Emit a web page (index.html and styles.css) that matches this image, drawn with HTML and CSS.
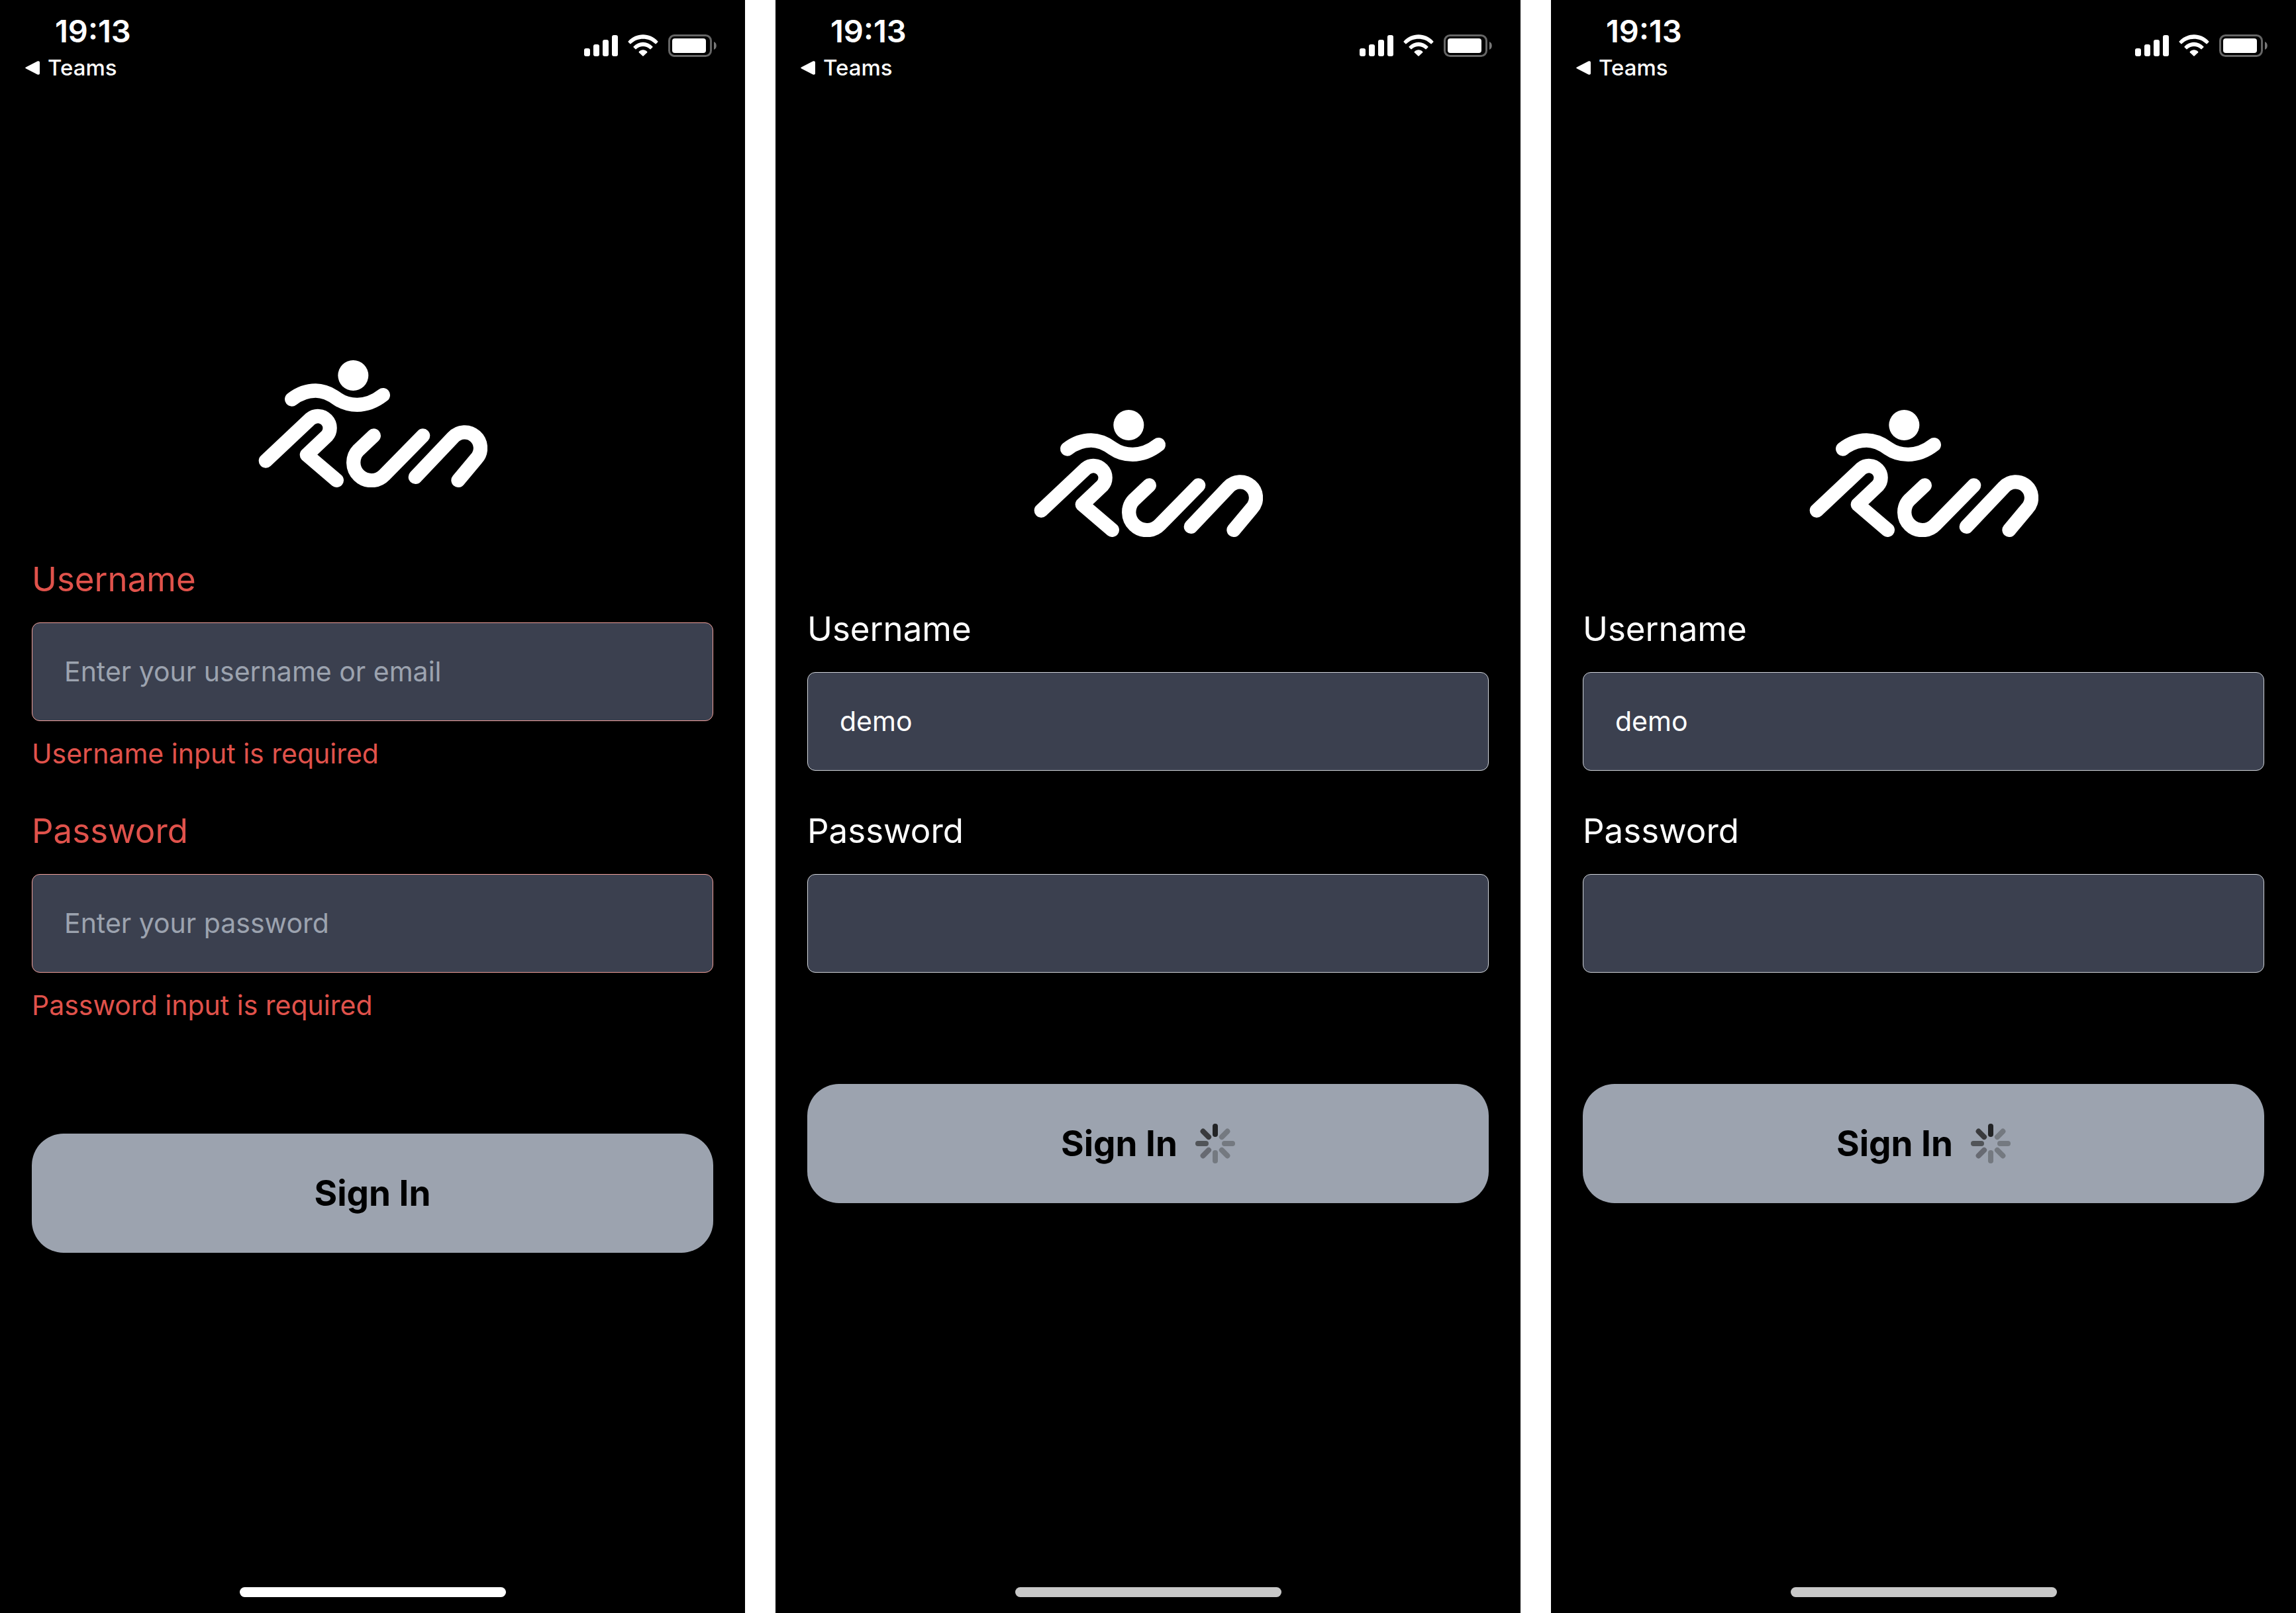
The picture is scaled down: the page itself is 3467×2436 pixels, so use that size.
FILE: index.html
```
<!DOCTYPE html>
<html lang="en">
<head>
<meta charset="utf-8">
<meta name="viewport" content="width=device-width, initial-scale=1">
<title>Run – Sign In</title>
<link rel="stylesheet" href="styles.css">
</head>
<body>
<svg class="sprite" aria-hidden="true">
  <symbol id="back" viewBox="0 0 22 21">
    <path d="M2 9 18.500 .6C20.500 -.3 22 .5 22 2.500V18.500C22 20.500 20.500 21.300 18.500 20.400L2 12C-.4 10.800 -.4 10.200 2 9Z"/>
  </symbol>
  <symbol id="status" viewBox="0 0 200 34">
    <rect x="0" y="21" width="9" height="12" rx="3"/>
    <rect x="14" y="15" width="9" height="18" rx="3"/>
    <rect x="28" y="8" width="9" height="25" rx="3"/>
    <rect x="42" y="1" width="9" height="32" rx="3"/>
    <path d="M66.600 10.400C78.500-3 99.500-3 111.400 10.400Q111.900 11 111.300 11.600L108.600 14.200Q107.900 14.700 107.300 14.100C97.500 4.300 80.500 4.300 70.700 14.100Q70.100 14.700 69.400 14.200L66.700 11.600Q66.100 11 66.600 10.400Z"/>
    <path d="M74.600 18.300C82.500 9.600 95.500 9.600 103.400 18.300Q103.900 19 103.300 19.600L100.500 22.200Q99.800 22.700 99.200 22.100C93.500 16.700 84.500 16.700 78.800 22.100Q78.200 22.700 77.500 22.200L74.700 19.600Q74.100 19 74.600 18.300Z"/>
    <path d="M82.800 26C86.300 22.200 91.700 22.200 95.200 26Q95.700 26.700 95.200 27.300L89.700 32.600Q89 33.100 88.300 32.600L82.800 27.300Q82.300 26.700 82.800 26Z"/>
    <rect x="128.500" y="1.500" width="63" height="31" rx="8" fill="none" stroke="#666" stroke-width="3"/>
    <rect x="133" y="6" width="51" height="22" rx="4"/>
    <path d="M196 11C201 12.500 201 21.500 196 23Z" fill="#777"/>
  </symbol>
  <symbol id="logo" viewBox="87 71 1038 576">
    <circle cx="517" cy="140" r="69"/>
    <g fill="none" stroke="currentColor" stroke-width="64" stroke-linecap="round" stroke-linejoin="round">
      <path d="M239 248C272 222 308 209 347 209C385 209 415 224 445 246C475 267 505 273 535 273C580 273 620 254 652 229"/>
      <path d="M121 527 324 336A54 54 0 0 1 398 414L307 500 442 615"/>
      <path d="M610 413 541 478A81 81 0 0 0 658 591L833 413"/>
      <path d="M799 600 969 421A71 71 0 0 1 1075 517L993 615"/>
    </g>
  </symbol>
  <symbol id="spinner" viewBox="-30 -30 60 60">
    <rect x="-4" y="-30" width="8" height="20" rx="4" fill="#222325"/>
    <rect x="-4" y="-30" width="8" height="20" rx="4" fill="#393a3d" transform="rotate(-45)"/>
    <rect x="-4" y="-30" width="8" height="20" rx="4" fill="#515458" transform="rotate(-90)"/>
    <rect x="-4" y="-30" width="8" height="20" rx="4" fill="#676a72" transform="rotate(-135)"/>
    <g fill="#747980">
      <rect x="-4" y="-30" width="8" height="20" rx="4" transform="rotate(180)"/>
      <rect x="-4" y="-30" width="8" height="20" rx="4" transform="rotate(135)"/>
      <rect x="-4" y="-30" width="8" height="20" rx="4" transform="rotate(90)"/>
      <rect x="-4" y="-30" width="8" height="20" rx="4" transform="rotate(45)"/>
    </g>
  </symbol>
</svg>
<div class="board">
  <section class="screen">
    <header class="status">
      <div class="status-left">
        <time class="clock">19:13</time>
        <a class="back" href="#"><svg class="back-icon"><use href="#back"/></svg>Teams</a>
      </div>
      <svg class="status-icons"><use href="#status"/></svg>
    </header>
    <main class="content">
      <svg class="logo" role="img" aria-label="Run"><use href="#logo"/></svg>
      <form class="form" novalidate>
        <div class="field invalid">
          <label class="label" for="user-1">Username</label>
          <input class="input" id="user-1" type="text" placeholder="Enter your username or email">
          <p class="error">Username input is required</p>
        </div>
        <div class="field invalid">
          <label class="label" for="pass-1">Password</label>
          <input class="input" id="pass-1" type="password" placeholder="Enter your password">
          <p class="error">Password input is required</p>
        </div>
        <button class="submit" type="button">Sign In</button>
      </form>
    </main>
    <footer class="home"><div class="home-bar"></div></footer>
  </section>
  <section class="screen">
    <header class="status">
      <div class="status-left">
        <time class="clock">19:13</time>
        <a class="back" href="#"><svg class="back-icon"><use href="#back"/></svg>Teams</a>
      </div>
      <svg class="status-icons"><use href="#status"/></svg>
    </header>
    <main class="content">
      <svg class="logo" role="img" aria-label="Run"><use href="#logo"/></svg>
      <form class="form" novalidate>
        <div class="field">
          <label class="label" for="user-2">Username</label>
          <input class="input" id="user-2" type="text" value="demo">
        </div>
        <div class="field">
          <label class="label" for="pass-2">Password</label>
          <input class="input" id="pass-2" type="password">
        </div>
        <button class="submit" type="button">Sign In<svg class="spinner"><use href="#spinner"/></svg></button>
      </form>
    </main>
    <footer class="home"><div class="home-bar dimmed"></div></footer>
  </section>
  <section class="screen">
    <header class="status">
      <div class="status-left">
        <time class="clock">19:13</time>
        <a class="back" href="#"><svg class="back-icon"><use href="#back"/></svg>Teams</a>
      </div>
      <svg class="status-icons"><use href="#status"/></svg>
    </header>
    <main class="content">
      <svg class="logo" role="img" aria-label="Run"><use href="#logo"/></svg>
      <form class="form" novalidate>
        <div class="field">
          <label class="label" for="user-3">Username</label>
          <input class="input" id="user-3" type="text" value="demo">
        </div>
        <div class="field">
          <label class="label" for="pass-3">Password</label>
          <input class="input" id="pass-3" type="password">
        </div>
        <button class="submit" type="button">Sign In<svg class="spinner"><use href="#spinner"/></svg></button>
      </form>
    </main>
    <footer class="home"><div class="home-bar dimmed"></div></footer>
  </section>
</div>
</body>
</html>
```

FILE: styles.css
```
* {
  box-sizing: border-box;
}

body {
  margin: 0;
  background: #fff;
  font-family: Inter, "Liberation Sans", sans-serif;
}

.sprite {
  display: none;
}

.board {
  display: grid;
  grid-template-columns: repeat(3, 1fr);
  gap: 46px;
  min-height: 100vh;
}

.screen {
  display: flex;
  flex-direction: column;
  background: #000;
  color: #fff;
}

.status {
  display: flex;
  justify-content: space-between;
  align-items: flex-start;
  height: 132px;
  padding: 20px 43px 0 38px;
}

.status-left {
  display: flex;
  flex-direction: column;
}

.clock {
  padding-left: 45px;
  font-size: 47px;
  font-weight: 600;
  line-height: 54px;
}

.back {
  display: flex;
  align-items: center;
  gap: 12px;
  color: inherit;
  font-size: 33px;
  font-weight: 500;
  line-height: 56px;
  text-decoration: none;
}

.back-icon {
  width: 22px;
  height: 21px;
  fill: #fff;
}

.status-icons {
  width: 200px;
  height: 34px;
  margin-top: 32px;
  fill: #fff;
}

.content {
  display: flex;
  flex: 1;
  flex-direction: column;
  align-items: center;
  justify-content: center;
  gap: 107px;
  padding: 0 48px;
}

.logo {
  width: 346px;
  height: 192px;
  fill: #fff;
}

.form {
  display: flex;
  flex-direction: column;
  gap: 59px;
  width: 100%;
}

.field {
  display: flex;
  flex-direction: column;
}

.label {
  margin-bottom: 33px;
  font-size: 51px;
  line-height: 64px;
}

.input {
  width: 100%;
  height: 149px;
  padding: 0 48px 2px;
  border: 1px solid #d1d5db;
  border-radius: 12px;
  background: #3b404f;
  color: #fff;
  font: inherit;
  font-size: 41px;
}

.input::placeholder {
  color: #9ca3af;
  opacity: 1;
}

.error {
  margin: 24px 0 0;
  font-size: 41px;
  line-height: 51px;
}

.invalid {
  color: #e0524b;
}

.invalid .input {
  border-color: #f0a09b;
}

.submit {
  display: flex;
  align-items: center;
  justify-content: center;
  gap: 27px;
  height: 180px;
  margin-top: 109px;
  border: 0;
  border-radius: 48px;
  background: #9ca3af;
  color: #000;
  font: inherit;
  font-size: 53px;
  font-weight: 700;
}

.spinner {
  width: 60px;
  height: 60px;
}

.home {
  display: flex;
  align-items: flex-end;
  justify-content: center;
  height: 132px;
  padding-bottom: 24px;
}

.home-bar {
  width: 402px;
  height: 15px;
  border-radius: 8px;
  background: #fff;
}

.home-bar.dimmed {
  background: #c8c8c8;
}
```
